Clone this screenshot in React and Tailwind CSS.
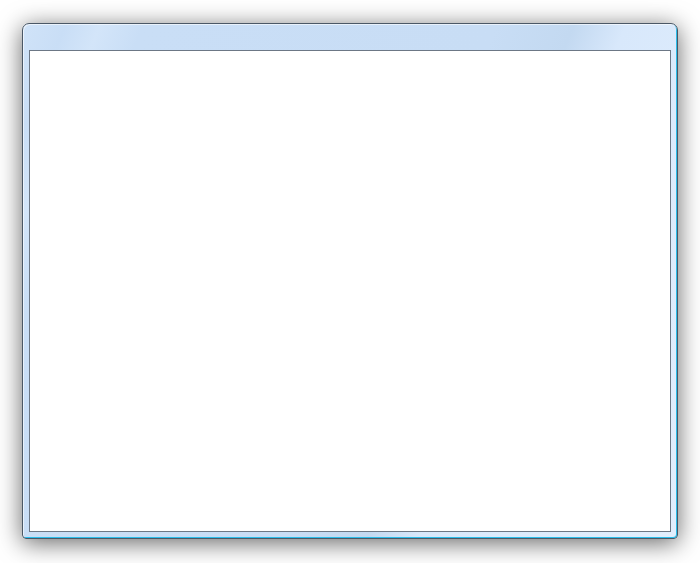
export default function App() {
  return (
    <div className="w-[700px] h-[563px] bg-white pl-[22px] pt-[23px]">
      <div className="w-[656px] h-[516px] flex flex-col rounded-t-[7px] rounded-b-[4px] border border-[#4b5866] bg-[linear-gradient(112deg,#d0e3f8_0%,#c9def6_5%,#d3e5f9_9%,#c9def6_14%,#c8ddf5_55%,#c3d9f1_64%,#d8e8fb_70%,#dcebfc_80%,#e1eefd_100%)] px-[6px] pt-[26px] pb-[6px] shadow-[0_4px_24px_rgba(0,0,0,0.6),inset_-1px_-1px_0_#2bbdea,inset_1px_1px_0_rgba(255,255,255,0.6)]">
        <div className="flex-1 bg-white border border-[#6c7785]"></div>
      </div>
    </div>
  );
}
